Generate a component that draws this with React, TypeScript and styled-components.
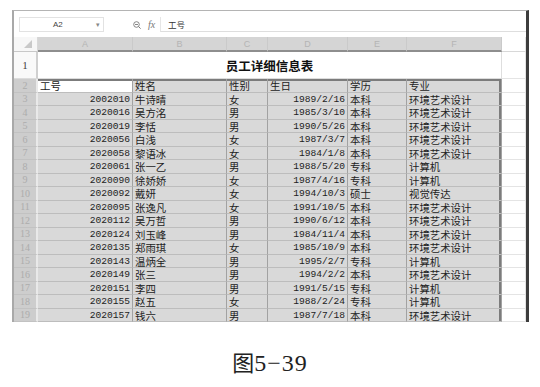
import React from 'react';
import styled, { createGlobalStyle } from 'styled-components';

const GlobalStyle = createGlobalStyle`
  html, body {
    margin: 0;
    padding: 0;
    background: #ffffff;
  }
  body {
    width: 540px;
    height: 387px;
    overflow: hidden;
    font-family: 'Liberation Sans', 'Noto Sans CJK SC', sans-serif;
  }
`;

const columns = ['A', 'B', 'C', 'D', 'E', 'F'];

const headers = ['工号', '姓名', '性别', '生日', '学历', '专业'];

const rows = [
  ['2002010', '牛诗晴', '女', '1989/2/16', '本科', '环境艺术设计'],
  ['2020016', '吴方洺', '男', '1985/3/10', '本科', '环境艺术设计'],
  ['2020019', '李恬', '男', '1990/5/26', '本科', '环境艺术设计'],
  ['2020056', '白浅', '女', '1987/3/7', '本科', '环境艺术设计'],
  ['2020058', '黎语冰', '女', '1984/1/8', '本科', '环境艺术设计'],
  ['2020061', '张一乙', '男', '1988/5/20', '专科', '计算机'],
  ['2020090', '徐娇娇', '女', '1987/4/16', '专科', '计算机'],
  ['2020092', '戴妍', '女', '1994/10/3', '硕士', '视觉传达'],
  ['2020095', '张逸凡', '女', '1991/10/5', '本科', '环境艺术设计'],
  ['2020112', '吴万哲', '男', '1990/6/12', '本科', '环境艺术设计'],
  ['2020124', '刘玉峰', '男', '1984/11/4', '本科', '环境艺术设计'],
  ['2020135', '郑雨琪', '女', '1985/10/9', '本科', '环境艺术设计'],
  ['2020143', '温炳全', '男', '1995/2/7', '专科', '计算机'],
  ['2020149', '张三', '男', '1994/2/2', '本科', '环境艺术设计'],
  ['2020151', '李四', '男', '1991/5/15', '专科', '计算机'],
  ['2020155', '赵五', '女', '1988/2/24', '专科', '计算机'],
  ['2020157', '钱六', '男', '1987/7/18', '本科', '环境艺术设计'],
];

// numbers and dates are right aligned like Excel does
const numericCols = [0, 3];

export default function App() {
  return (
    <>
      <GlobalStyle />
      <Page>
        <Window>
          <FormulaBar>
            <NameBox>
              A2
              <Caret>▾</Caret>
            </NameBox>
            <Tools>
              <svg width="8" height="8" viewBox="0 0 8 8">
                <circle cx="3.5" cy="3.5" r="2.8" fill="none" stroke="#777" strokeWidth="0.9" />
                <line x1="2" y1="3.5" x2="5" y2="3.5" stroke="#777" strokeWidth="0.9" />
                <line x1="5.5" y1="5.5" x2="7.6" y2="7.6" stroke="#777" strokeWidth="1" />
              </svg>
              <Fx>fx</Fx>
            </Tools>
            <FormulaInput>工号</FormulaInput>
          </FormulaBar>

          <Sheet>
            <Corner>
              <svg width="8" height="8" viewBox="0 0 8 8">
                <polygon points="8,0 8,8 0,8" fill="#c9c9c9" />
              </svg>
            </Corner>
            {columns.map((c) => (
              <ColHead key={c} $sel>
                {c}
              </ColHead>
            ))}
            <ColHead />

            <RowHead>1</RowHead>
            <Title>员工详细信息表</Title>
            <Cell $kind="blank" />

            <RowHead $sel>2</RowHead>
            {headers.map((h, i) => (
              <Cell
                key={h}
                $kind={i === 0 ? 'active' : 'sel'}
                $top
                $edge={i === 5}
              >
                {h}
              </Cell>
            ))}
            <Cell $kind="blank" />

            {rows.map((row, r) => (
              <React.Fragment key={row[0]}>
                <RowHead $sel>{r + 3}</RowHead>
                {row.map((v, i) => (
                  <Cell
                    key={i}
                    $kind="sel"
                    $num={numericCols.includes(i)}
                    $edge={i === 5}
                  >
                    {v}
                  </Cell>
                ))}
                <Cell $kind="blank" />
              </React.Fragment>
            ))}
          </Sheet>
        </Window>

        <Caption>
          图<FigNum>5−39</FigNum>
        </Caption>
      </Page>
    </>
  );
}

const Page = styled.div`
  padding-top: 10px;
  padding-left: 12px;
`;

const Window = styled.div`
  box-sizing: border-box;
  width: 517px;
  border-top: 1px solid #b4b4b4;
  border-left: 2px solid #a9a9a9;
  border-right: 3px solid #3d3d3d;
  background: #ffffff;
`;

const FormulaBar = styled.div`
  display: flex;
  align-items: flex-start;
  height: 26px;
  padding: 6px 0 0 5px;
  box-sizing: border-box;
`;

const NameBox = styled.div`
  position: relative;
  box-sizing: border-box;
  width: 85px;
  height: 15px;
  border: 1px solid #e2e2e2;
  padding-left: 33px;
  font-size: 8px;
  line-height: 13px;
  color: #444;
`;

const Caret = styled.span`
  position: absolute;
  right: 3px;
  top: 0;
  font-size: 7px;
  color: #888;
`;

const Tools = styled.div`
  display: flex;
  align-items: center;
  gap: 7px;
  height: 15px;
  margin-left: 29px;
  width: 27px;
`;

const Fx = styled.span`
  font-family: 'Liberation Serif', serif;
  font-style: italic;
  font-size: 10px;
  color: #777;
`;

const FormulaInput = styled.div`
  flex: 1;
  box-sizing: border-box;
  height: 15px;
  border-left: 1px solid #e6e6e6;
  border-bottom: 1px solid #dedede;
  padding-left: 7px;
  font-family: 'Noto Sans CJK SC', sans-serif;
  font-size: 8.5px;
  line-height: 14px;
  color: #333;
`;

const Sheet = styled.div`
  display: grid;
  grid-template-columns: 24px 95px 94px 41px 80px 59px 95px 1fr;
  grid-template-rows: 15px 27px repeat(18, 13.5px);
`;

const Corner = styled.div`
  display: flex;
  align-items: flex-end;
  justify-content: flex-end;
  padding: 0 5px 3px 0;
  background: #f7f7f7;
  border-bottom: 1px solid #c8c8c8;
  border-right: 1px solid #d8d8d8;
`;

const ColHead = styled.div<{ $sel?: boolean }>`
  display: flex;
  align-items: center;
  justify-content: center;
  box-sizing: border-box;
  background: ${(p) => (p.$sel ? '#d5d5d5' : '#ffffff')};
  border-right: 1px solid ${(p) => (p.$sel ? '#cacaca' : '#e4e4e4')};
  border-bottom: ${(p) => (p.$sel ? '2px solid #8e8e8e' : '1px solid #d8d8d8')};
  font-family: 'Liberation Sans', sans-serif;
  font-size: 9px;
  color: #b4b4b4;
`;

const RowHead = styled.div<{ $sel?: boolean }>`
  display: flex;
  align-items: center;
  justify-content: center;
  box-sizing: border-box;
  background: ${(p) => (p.$sel ? '#cdcdcd' : '#f9f9f9')};
  border-bottom: 1px solid ${(p) => (p.$sel ? '#c2c2c2' : '#dcdcdc')};
  border-right: 2px solid ${(p) => (p.$sel ? '#e9e9e9' : '#d0d0d0')};
  font-family: 'Liberation Serif', 'DejaVu Serif', serif;
  font-size: ${(p) => (p.$sel ? '10px' : '11px')};
  color: ${(p) => (p.$sel ? '#acacac' : '#444444')};
`;

const Title = styled.div`
  grid-column: 2 / 8;
  display: flex;
  align-items: center;
  justify-content: center;
  border-right: 1px solid #dedede;
  border-bottom: 1px solid #dcdcdc;
  font-family: 'Noto Sans CJK SC', sans-serif;
  font-weight: 700;
  font-size: 12.5px;
  color: #111;
`;

type CellProps = {
  $kind: 'sel' | 'active' | 'blank';
  $num?: boolean;
  $top?: boolean;
  $edge?: boolean;
};

const outline = (p: CellProps) => {
  const parts: string[] = [];
  if (p.$top) parts.push('inset 0 2px 0 #7c7c7c');
  if (p.$edge) parts.push('inset -2px 0 0 #7c7c7c');
  return parts.length ? parts.join(', ') : 'none';
};

const Cell = styled.div<CellProps>`
  box-sizing: border-box;
  white-space: nowrap;
  padding: 0 ${(p) => (p.$num ? '2px' : '0')} 0 ${(p) => (p.$num ? '0' : '2px')};
  text-align: ${(p) => (p.$num ? 'right' : 'left')};
  background: ${(p) => (p.$kind === 'sel' ? '#d9d9d9' : '#ffffff')};
  border-bottom: 1px solid ${(p) => (p.$kind === 'blank' ? '#e4e4e4' : '#bdbdbd')};
  border-right: 1px solid ${(p) => (p.$kind === 'blank' ? '#e4e4e4' : '#a2a2a2')};
  box-shadow: ${outline};
  font-family: ${(p) =>
    p.$num ? "'Liberation Mono', monospace" : "'Noto Sans CJK SC', sans-serif"};
  font-size: ${(p) => (p.$num ? '9.6px' : '10.4px')};
  line-height: 13px;
  color: #222;
`;

const Caption = styled.div`
  margin-top: 27px;
  padding-right: 12px;
  text-align: center;
  font-family: 'Noto Sans CJK SC', sans-serif;
  font-size: 22px;
  line-height: 24px;
  color: #222;
`;

const FigNum = styled.span`
  font-family: 'Liberation Serif', 'Noto Sans CJK SC', serif;
  font-size: 24px;
  letter-spacing: 1px;
`;
